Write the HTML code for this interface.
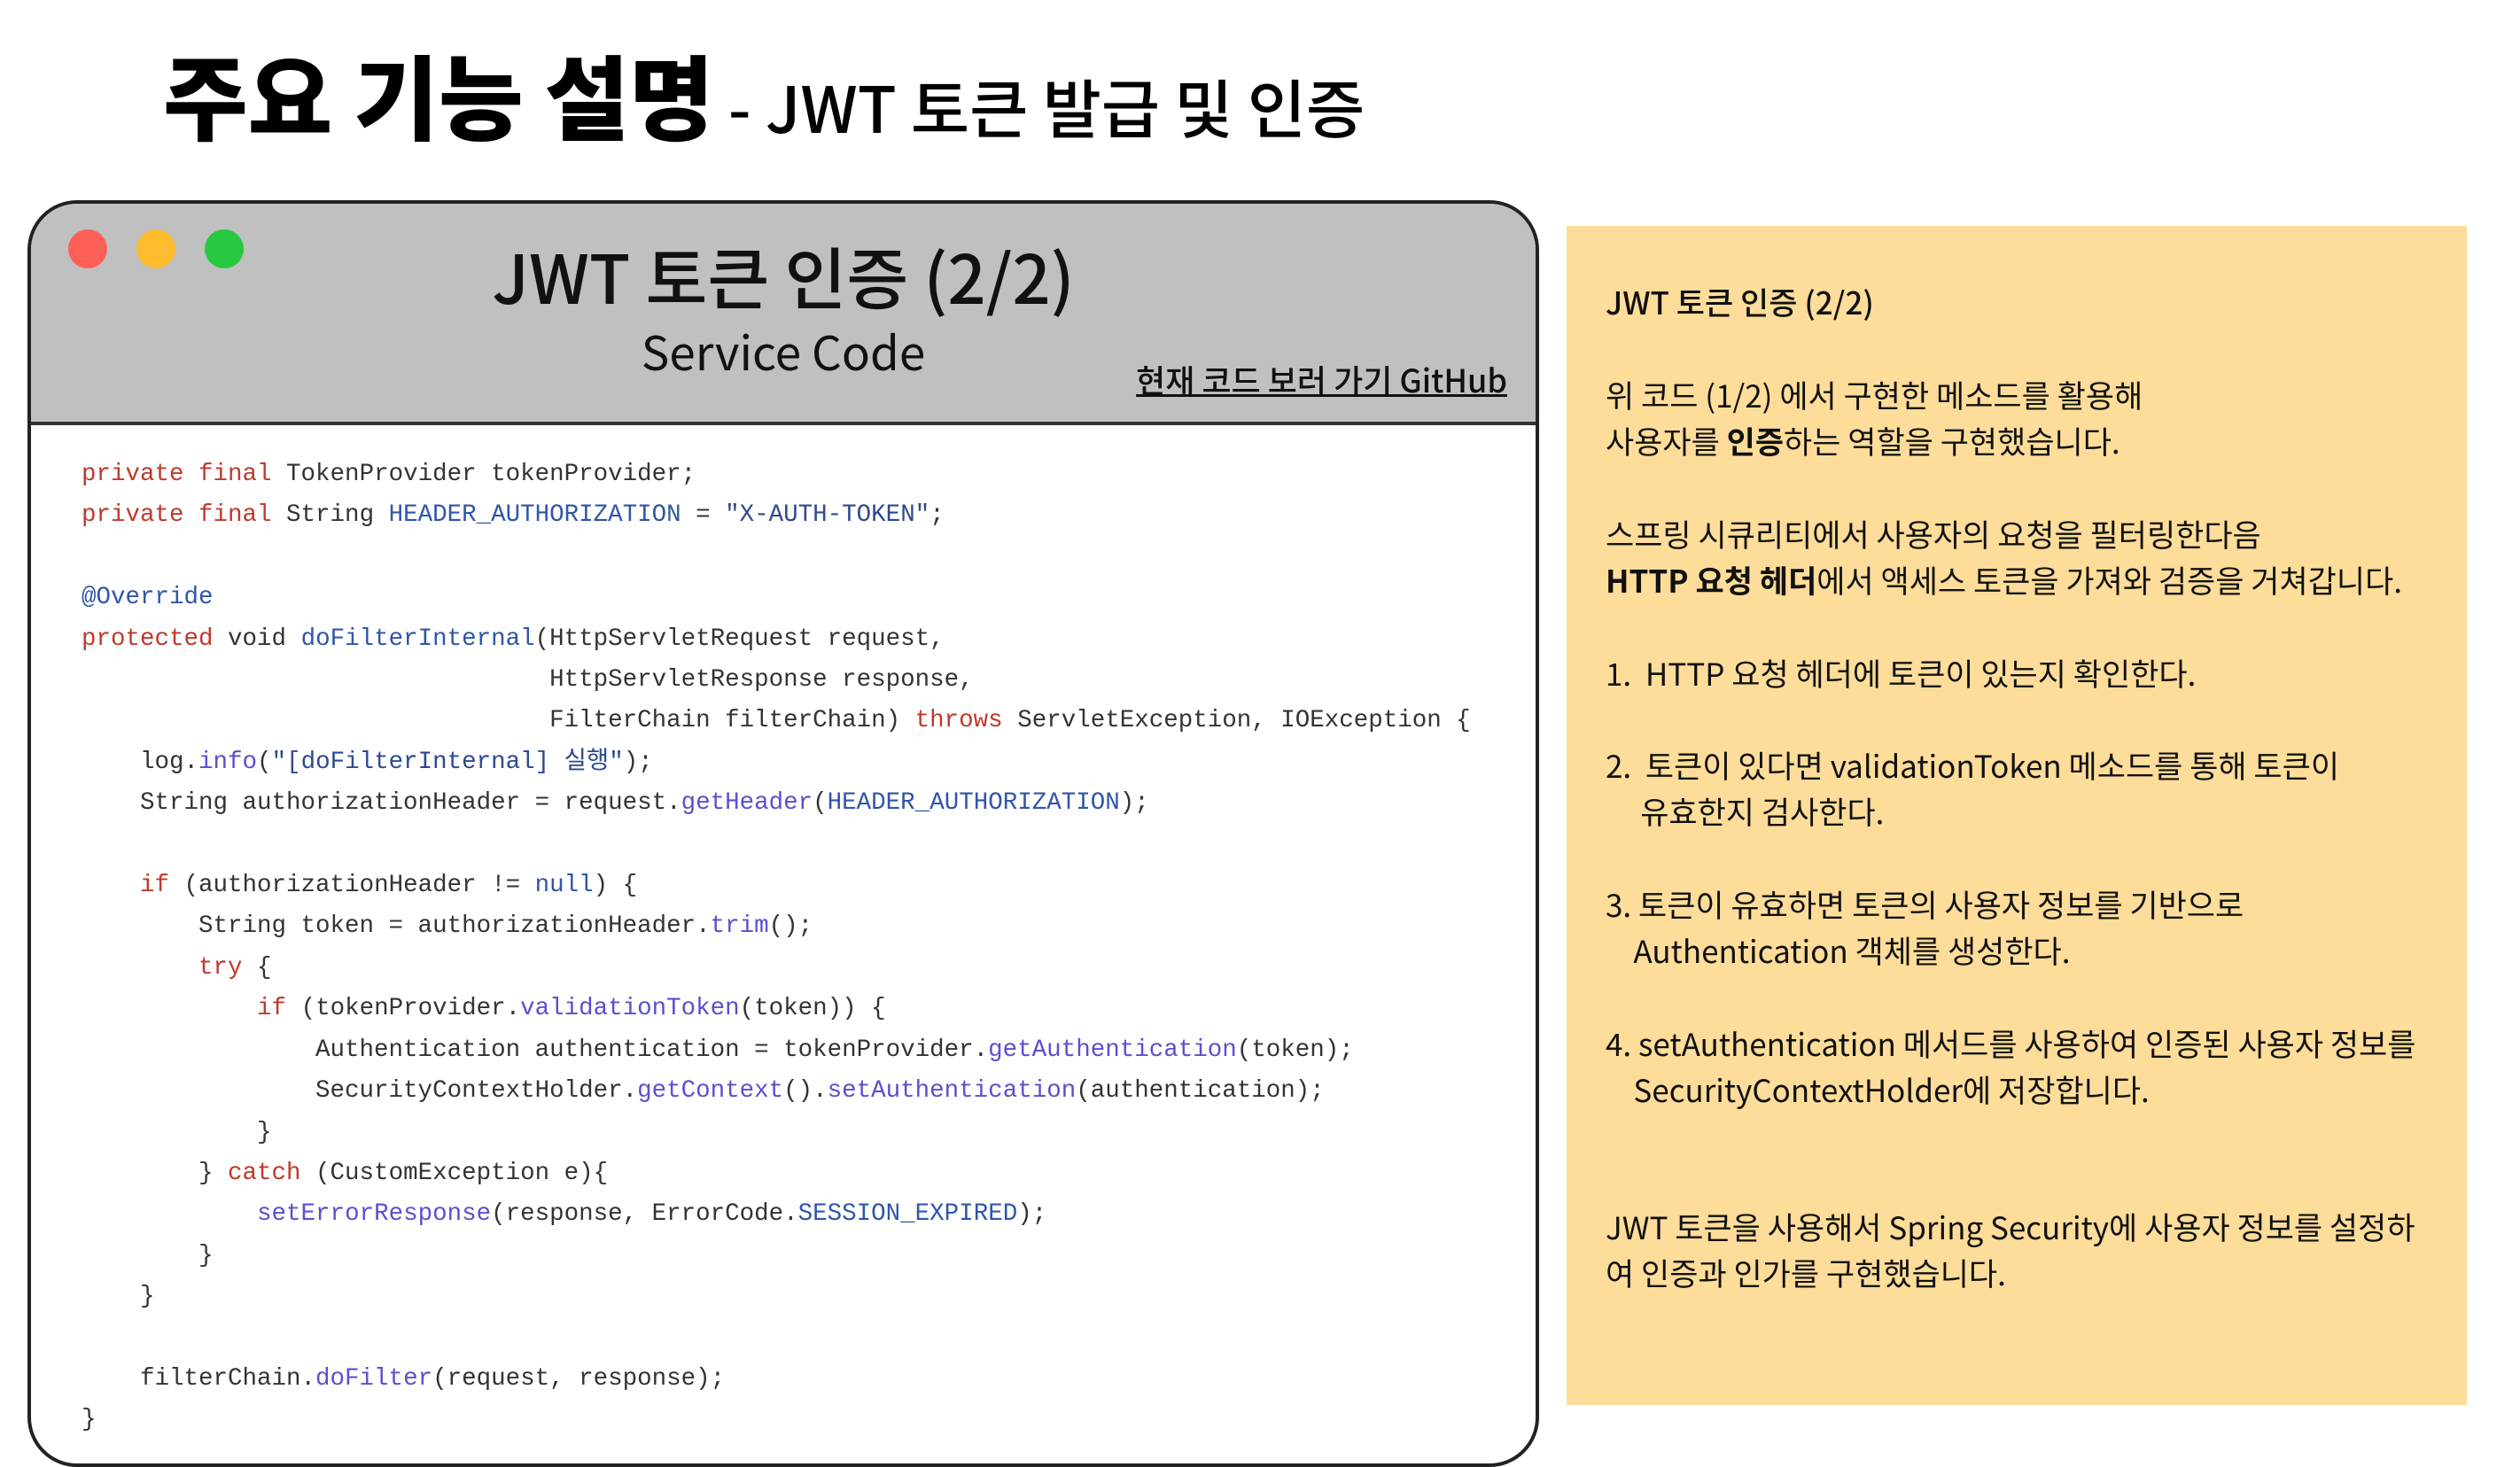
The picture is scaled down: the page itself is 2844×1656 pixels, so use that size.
<!DOCTYPE html>
<html><head><meta charset="utf-8"><style>
body{margin:0;width:2844px;height:1654px;background:#fff;position:relative;overflow:hidden;font-family:"Liberation Sans","Noto Sans CJK KR",sans-serif;}
.a{position:absolute;white-space:pre;}
#win{position:absolute;left:31px;top:226px;width:1698px;height:1422px;border:4px solid #222;border-radius:56px;background:#fff;overflow:hidden;}
#hdr{position:absolute;left:0;top:0;right:0;height:246px;background:#c0c0c0;border-bottom:4px solid #333;}
.dot{position:absolute;width:44px;height:44px;border-radius:50%;top:29px;}
pre{position:absolute;left:57px;top:283px;margin:0;font-family:"Liberation Mono","Noto Sans CJK KR",monospace;font-size:27.5px;line-height:46.4px;color:#333;}
.k{color:#c0392b}.b{color:#2f56a8}.m{color:#5b4fd0}.s{color:#2e4a8f}
#note{position:absolute;left:1768px;top:255px;width:1016px;height:1331px;background:#fddd99;}
.n{position:absolute;left:44px;font-family:"Noto Sans CJK KR",sans-serif;font-size:35px;line-height:52px;color:#111;white-space:pre;}
</style></head><body>
<div class="a" style="left:184px;top:40px;font-family:'Noto Sans CJK KR',sans-serif;font-weight:900;font-size:104px;line-height:130px;color:#000">주요 기능 설명<span style="font-weight:500;font-size:72px"> - JWT 토큰 발급 및 인증</span></div>
<div id="win">
<div id="hdr">
<div class="dot" style="left:42px;background:#fe5f57"></div>
<div class="dot" style="left:119px;background:#febc2e"></div>
<div class="dot" style="left:196px;background:#28c840"></div>
<div class="a" style="left:0;width:100%;text-align:center;top:30px;font-family:'Noto Sans CJK KR',sans-serif;font-weight:500;font-size:76px;line-height:100px;color:#111">JWT 토큰 인증 (2/2)</div>
<div class="a" style="left:0;width:100%;text-align:center;top:130px;font-family:'Noto Sans CJK KR',sans-serif;font-size:53px;line-height:72px;color:#111">Service Code</div>
<div class="a" style="right:32px;top:174px;font-family:'Noto Sans CJK KR',sans-serif;font-weight:500;font-size:36px;line-height:48px;color:#111;text-decoration:underline;">현재 코드 보러 가기 GitHub</div>
</div>
<pre><span class="k">private final</span> TokenProvider tokenProvider;
<span class="k">private final</span> String <span class="b">HEADER_AUTHORIZATION</span> = <span class="s">"X-AUTH-TOKEN"</span>;

<span class="b">@Override</span>
<span class="k">protected</span> void <span class="b">doFilterInternal</span>(HttpServletRequest request,
                                HttpServletResponse response,
                                FilterChain filterChain) <span class="k">throws</span> ServletException, IOException {
    log.<span class="m">info</span>(<span class="s">"[doFilterInternal] 실행"</span>);
    String authorizationHeader = request.<span class="m">getHeader</span>(<span class="b">HEADER_AUTHORIZATION</span>);

    <span class="k">if</span> (authorizationHeader != <span class="b">null</span>) {
        String token = authorizationHeader.<span class="m">trim</span>();
        <span class="k">try</span> {
            <span class="k">if</span> (tokenProvider.<span class="m">validationToken</span>(token)) {
                Authentication authentication = tokenProvider.<span class="m">getAuthentication</span>(token);
                SecurityContextHolder.<span class="m">getContext</span>().<span class="m">setAuthentication</span>(authentication);
            }
        } <span class="k">catch</span> (CustomException e){
            <span class="m">setErrorResponse</span>(response, ErrorCode.<span class="b">SESSION_EXPIRED</span>);
        }
    }

    filterChain.<span class="m">doFilter</span>(request, response);
}</pre>
</div>
<div id="note">
<div class="n" style="top:60px;font-weight:500">JWT 토큰 인증 (2/2)</div>
<div class="n" style="top:165px">위 코드 (1/2) 에서 구현한 메소드를 활용해</div>
<div class="n" style="top:217px">사용자를 <b>인증</b>하는 역할을 구현했습니다.</div>
<div class="n" style="top:322px">스프링 시큐리티에서 사용자의 요청을 필터링한다음</div>
<div class="n" style="top:374px"><b>HTTP 요청 헤더</b>에서 액세스 토큰을 가져와 검증을 거쳐갑니다.</div>
<div class="n" style="top:479px">1.  HTTP 요청 헤더에 토큰이 있는지 확인한다.</div>
<div class="n" style="top:583px">2.  토큰이 있다면 validationToken 메소드를 통해 토큰이</div>
<div class="n" style="top:635px">     유효한지 검사한다.</div>
<div class="n" style="top:740px">3. 토큰이 유효하면 토큰의 사용자 정보를 기반으로</div>
<div class="n" style="top:792px">    Authentication 객체를 생성한다.</div>
<div class="n" style="top:897px">4. setAuthentication 메서드를 사용하여 인증된 사용자 정보를</div>
<div class="n" style="top:949px">    SecurityContextHolder에 저장합니다.</div>
<div class="n" style="top:1104px">JWT 토큰을 사용해서 Spring Security에 사용자 정보를 설정하</div>
<div class="n" style="top:1156px">여 인증과 인가를 구현했습니다.</div>
</div>
</body></html>
